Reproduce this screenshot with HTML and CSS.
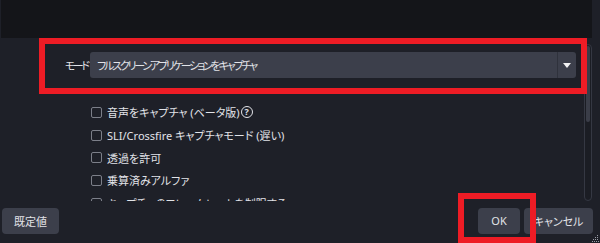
FILE: index.html
```html
<!DOCTYPE html>
<html lang="ja">
<head>
<meta charset="utf-8">
<link rel="stylesheet" href="styles.css">
</head>
<body>
<div class="preview"></div>
<div class="main">
  <div class="scroll">
    <div class="form-row">
      <span class="label">モード</span>
      <div class="combo">
        <span class="combo-text">フルスクリーンアプリケーションをキャプチャ</span>
        <span class="drop"><span class="arrow"></span></span>
      </div>
    </div>
    <ul class="checks">
      <li><span class="box"></span><span class="ctext">音声をキャプチャ (ベータ版)</span><span class="help">?</span></li>
      <li><span class="box"></span><span class="ctext">SLI/Crossfire キャプチャモード (遅い)</span></li>
      <li><span class="box"></span><span class="ctext">透過を許可</span></li>
      <li><span class="box"></span><span class="ctext">乗算済みアルファ</span></li>
      <li><span class="box"></span><span class="ctext">キャプチャのフレームレートを制限する</span></li>
    </ul>
  </div>
  <div class="scrollbar"><div class="thumb"></div></div>
</div>
<div class="buttons">
  <button class="btn btn-default">既定値</button>
  <span class="spacer"></span>
  <button class="btn btn-ok">OK</button>
  <button class="btn btn-cancel">キャンセル</button>
</div>
<div class="grip">
  <svg width="7" height="7" viewBox="0 0 7 7"><g fill="#9a9da6"><rect x="5" y="0" width="1" height="1"/><rect x="3" y="2" width="1" height="1"/><rect x="5" y="2" width="1" height="1"/><rect x="1" y="4" width="1" height="1"/><rect x="3" y="4" width="1" height="1"/><rect x="5" y="4" width="1" height="1"/><rect x="0" y="6" width="1" height="1"/><rect x="2" y="6" width="1" height="1"/><rect x="4" y="6" width="1" height="1"/><rect x="6" y="6" width="1" height="1"/></g></svg>
</div>
<div class="redbox red-mode"></div>
<div class="redbox red-ok"></div>
</body>
</html>
```
FILE: styles.css
```css
html, body {
  margin: 0;
  padding: 0;
}
body {
  width: 600px;
  height: 243px;
  overflow: hidden;
  background: #1e2028;
  color: #e2e3e8;
  font-family: "Noto Sans", "Noto Sans CJK JP", sans-serif;
  font-size: 11px;
  font-feature-settings: "palt";
  position: relative;
}
.preview {
  height: 38px;
  margin-left: 1px;
  margin-right: 8px;
  background: #141519;
}
.main {
  display: flex;
  height: 163px;
}
.scroll {
  flex: 1;
  overflow: hidden;
}
.form-row {
  display: flex;
  align-items: center;
  margin-top: 14px;
  margin-right: 8px;
}
.label {
  width: 87.5px;
  margin-right: 2.5px;
  text-align: right;
  font-size: 11px;
  letter-spacing: -2.5px;
  white-space: nowrap;
}
.combo {
  flex: 1;
  height: 26px;
  background: #3c3f4b;
  border-radius: 3px;
  display: flex;
  align-items: center;
}
.combo-text {
  flex: 1;
  padding-left: 7px;
  font-size: 11px;
  letter-spacing: -2.2px;
  white-space: nowrap;
}
.drop {
  width: 19px;
  height: 26px;
  border-left: 1px solid #2f323c;
  display: flex;
  align-items: center;
  justify-content: center;
  box-sizing: border-box;
}
.arrow {
  width: 0;
  height: 0;
  border-left: 4px solid transparent;
  border-right: 4px solid transparent;
  border-top: 5px solid #f2f2f4;
}
.checks {
  list-style: none;
  margin: 23px 0 0 0;
  padding: 0 0 0 91px;
}
.checks li {
  height: 22.7px;
  display: flex;
  align-items: center;
}
.box {
  width: 11px;
  height: 11px;
  box-sizing: border-box;
  border: 1px solid #7c7f89;
  border-radius: 2px;
  margin-right: 5px;
  flex: none;
}
.ctext {
  white-space: nowrap;
}
.help {
  width: 12px;
  height: 12px;
  box-sizing: border-box;
  border: 1.3px solid #e2e3e8;
  border-radius: 50%;
  font-size: 9px;
  font-weight: bold;
  line-height: 10px;
  text-align: center;
  margin-left: 1px;
}
.scrollbar {
  width: 8px;
  margin-top: 6px;
  margin-right: 8px;
  box-sizing: border-box;
  border: 1px solid #353843;
  border-radius: 4px;
  background: #1b1d24;
  padding: 1px;
}
.thumb {
  height: 76px;
  background: #3a3d48;
  border-radius: 3px;
}
.buttons {
  display: flex;
  align-items: center;
  margin-top: 7px;
  padding-left: 2px;
  padding-right: 7px;
  gap: 4px;
}
.spacer {
  flex: 1;
}
.btn {
  height: 25.5px;
  background: #3c3f4b;
  color: #e2e3e8;
  border: none;
  border-radius: 4px;
  font-family: "Noto Sans", "Noto Sans CJK JP", sans-serif;
  font-size: 11px;
  font-feature-settings: "palt";
  padding: 0;
}
.btn-default { width: 57px; }
.btn-ok { width: 42px; }
.btn-cancel { width: 69px; }
.grip {
  position: absolute;
  right: 1px;
  bottom: 1px;
  width: 7px;
  height: 7px;
  line-height: 0;
}
.redbox {
  position: absolute;
  border: 6px solid #ee1c25;
  box-sizing: border-box;
}
.red-mode {
  left: 39px;
  top: 38px;
  width: 548px;
  height: 55.5px;
}
.red-ok {
  left: 458px;
  top: 193px;
  width: 78px;
  height: 50px;
}
```
